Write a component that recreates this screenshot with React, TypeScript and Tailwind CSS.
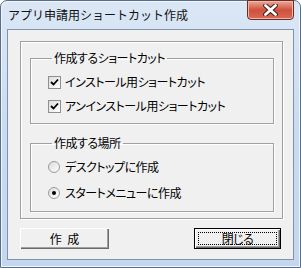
import * as React from "react";

function CheckBox({ label }: { label: string }) {
  return (
    <div className="flex h-[16px] items-center">
      <span className="flex h-[13px] w-[13px] items-center justify-center border border-[#8e8f8f] bg-gradient-to-br from-[#dcdcdc] to-white">
        <svg width="9" height="9" viewBox="0 0 9 9">
          <path d="M1 4 L3.5 6.5 L8 1.5" fill="none" stroke="#000" strokeWidth="1.8" />
        </svg>
      </span>
      <span className="ml-[4px] text-[12px] leading-[16px] tracking-[-0.5px] text-black">{label}</span>
    </div>
  );
}

function Radio({ label, checked }: { label: string; checked?: boolean }) {
  return (
    <div className="flex h-[16px] items-center">
      <span className="flex h-[12px] w-[12px] items-center justify-center rounded-full border border-[#9a9a9a] bg-gradient-to-br from-[#dcdcdc] to-white">
        {checked && <span className="h-[4px] w-[4px] rounded-full bg-black" />}
      </span>
      <span className="ml-[5px] text-[12px] leading-[16px] tracking-[-0.5px] text-black">{label}</span>
    </div>
  );
}

function Group({
  title,
  height,
  gap,
  children,
}: {
  title: string;
  height: string;
  gap: string;
  children: React.ReactNode;
}) {
  return (
    <fieldset
      className={`${height} w-[244px] border border-[#a0a0a0] pl-[17px] shadow-[inset_1px_1px_0_#fff,1px_1px_0_#fff]`}
    >
      <legend className="ml-[4px] px-[2px] text-[12px] leading-[16px] tracking-[-0.5px] text-black">
        {title}
      </legend>
      <div className={`mt-[8px] flex flex-col ${gap}`}>{children}</div>
    </fieldset>
  );
}

export default function App() {
  return (
    <div className="h-[268px] w-[301px] overflow-hidden bg-white font-['Noto_Sans_CJK_JP',sans-serif] [font-feature-settings:'palt']">
      <div className="flex h-[268px] w-[301px] flex-col rounded-t-[7px] border border-[#5c6e86] bg-gradient-to-b from-[#dbe7f5] via-[#c9dbf1] to-[#c4d7ee] shadow-[inset_1px_1px_0_#eef5fd,inset_-1px_-1px_0_#eef5fd]">
        <div className="flex h-[28px] shrink-0 items-start justify-between pl-[7px] pr-[6px]">
          <span className="mt-[6px] text-[12px] leading-[16px] text-[#111] [font-feature-settings:normal]">
            アプリ申請用ショートカット作成
          </span>
          <span className="-mt-px flex h-[20px] w-[47px] items-center justify-center rounded-b-[4px] border border-[#6b2a22] bg-gradient-to-b from-[#e9a99b] via-[#cf503b] to-[#d86a57] shadow-[inset_0_0_0_1px_#f1b9ad]">
            <svg width="15" height="12" viewBox="0 0 15 12">
              <path
                d="M2.5 1.5 L12.5 10.5 M12.5 1.5 L2.5 10.5"
                stroke="#3a1a16"
                strokeWidth="4.6"
                strokeLinecap="round"
              />
              <path
                d="M2.5 1.5 L12.5 10.5 M12.5 1.5 L2.5 10.5"
                stroke="#fff"
                strokeWidth="2.8"
                strokeLinecap="round"
              />
            </svg>
          </span>
        </div>

        <div className="mx-[6px] mb-[7px] flex flex-1 flex-col border border-[#8193ab] bg-[#f0f0f0] pl-[12px] pt-[11px]">
          <div className="flex h-[178px] w-[263px] flex-col gap-[11px] border border-[#a0a0a0] pl-[9px] pt-[8px] shadow-[inset_1px_1px_0_#fff,1px_1px_0_#fff]">
            <Group title="作成するショートカット" height="h-[74px]" gap="gap-[8px]">
              <CheckBox label="インストール用ショートカット" />
              <CheckBox label="アンインストール用ショートカット" />
            </Group>
            <Group title="作成する場所" height="h-[77px]" gap="gap-[10px]">
              <Radio label="デスクトップに作成" />
              <Radio label="スタートメニューに作成" checked />
            </Group>
          </div>

          <div className="mt-[9px] flex w-[261px] justify-between">
            <button className="h-[21px] w-[89px] bg-[#f0f0f0] text-[12px] leading-[16px] text-black shadow-[inset_1px_1px_0_#fff,inset_-1px_-1px_0_#696969,inset_-2px_-2px_0_#a0a0a0]">
              作&nbsp;&nbsp;成
            </button>
            <button className="flex h-[21px] w-[87px] items-center justify-center border border-black bg-[#f0f0f0] p-[3px] text-[12px] leading-[16px] tracking-[-0.5px] text-black shadow-[inset_1px_1px_0_#fff,inset_-1px_-1px_0_#696969,inset_-2px_-2px_0_#a0a0a0]">
              <span className="flex h-full w-full items-center justify-center border border-dotted border-black">
                閉じる
              </span>
            </button>
          </div>
        </div>
      </div>
    </div>
  );
}
